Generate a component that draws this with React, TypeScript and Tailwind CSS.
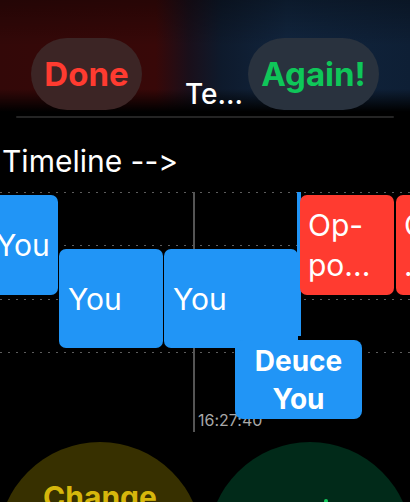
import React from "react";

const dotted =
  "absolute left-0 w-[410px] h-[1px] bg-[repeating-linear-gradient(to_right,#5c5c5c_0px,#5c5c5c_2px,transparent_2px,transparent_8px)]";

export default function App() {
  return (
    <div
      className="relative w-[410px] h-[502px] bg-black overflow-hidden text-white [font-feature-settings:'calt'_0,'liga'_0]"
      style={{ fontFamily: "Inter, 'Noto Sans', sans-serif" }}
    >
      {/* Header */}
      <div className="relative h-[114px]">
        <div className="absolute inset-0 bg-[linear-gradient(to_right,#330808_0%,#380808_38%,#1a0f1a_46%,#0e1a2c_54%,#11253e_70%,#0e1f35_100%)]" />
        <div className="absolute inset-0 bg-[linear-gradient(to_bottom,rgba(0,0,0,0.3)_0%,rgba(0,0,0,0)_40%,rgba(0,0,0,0)_78%,#000_98%)]" />
        <div className="relative flex h-full items-start pt-[38px]">
          <div className="ml-[31px] w-[111px] h-[72px] rounded-full bg-[#3c2525] flex items-center justify-center">
            <span className="text-[33px] leading-none font-bold text-[#ff3b30]">Done</span>
          </div>
          <div className="w-[106px] self-end pl-[43px] mb-[2px]">
            <span className="block text-[28px] leading-[36px] font-medium whitespace-nowrap">Te...</span>
          </div>
          <div className="ml-auto mr-[31px] w-[131px] h-[72px] rounded-full bg-[#29323e] flex items-center justify-center">
            <span className="text-[33px] leading-none font-bold text-[#0fc659]">Again!</span>
          </div>
        </div>
      </div>

      {/* separator */}
      <div className="mx-[16px] mt-[2px] h-[2px] bg-[#242424] rounded-full" />

      <div className="mt-[25px] pl-[2px] text-[30px] leading-[36px] whitespace-nowrap">Timeline --&gt;</div>

      {/* Timeline canvas */}
      <div className="relative mt-[13px] h-[250px]">
        <div className={`${dotted} top-0`} />
        <div className={`${dotted} top-[53px]`} />
        <div className={`${dotted} top-[107px]`} />
        <div className={`${dotted} top-[160px]`} />

        <div className="absolute left-[193px] top-0 w-[2px] h-[240px] bg-[#555555]" />
        <div className="absolute left-[198px] top-[219px] text-[16px] leading-[18px] text-[#a8a8a8]">16:27:40</div>

        <div className="absolute left-[-13px] top-[3px] w-[71px] h-[100px] rounded-[7px] bg-[#2195f6] flex items-center pl-[9px]">
          <span className="text-[30px] leading-none">You</span>
        </div>
        <div className="absolute left-[59px] top-[57px] w-[104px] h-[99px] rounded-[7px] bg-[#2195f6] flex items-center pl-[9px]">
          <span className="text-[30px] leading-none">You</span>
        </div>
        <div className="absolute left-[164px] top-[57px] w-[134px] h-[99px] rounded-[7px] bg-[#2195f6] flex items-center pl-[9px]">
          <span className="text-[30px] leading-none">You</span>
        </div>
        <div className="absolute left-[297px] top-0 w-[4px] h-[144px] bg-[#2195f6]" />

        <div className="absolute left-[300px] top-[3px] w-[94px] h-[100px] rounded-[7px] bg-[#ff3b30] flex flex-col justify-center pl-[8px]">
          <span className="text-[30px] leading-[40px]">Op-</span>
          <span className="text-[30px] leading-[40px]">po...</span>
        </div>
        <div className="absolute left-[396px] top-[3px] w-[94px] h-[100px] rounded-[7px] bg-[#ff3b30] flex flex-col justify-center pl-[8px]">
          <span className="text-[30px] leading-[40px]">Op-</span>
          <span className="text-[30px] leading-[40px]">...</span>
        </div>

        <div className="absolute left-[235px] top-[148px] w-[127px] h-[79px] rounded-[8px] bg-[#2195f6] flex flex-col items-center justify-center">
          <span className="text-[28px] leading-[38px] font-bold">Deuce</span>
          <span className="text-[28px] leading-[38px] font-bold">You</span>
        </div>
      </div>

      {/* bottom circles */}
      <div className="flex ml-[-2px] gap-[6px]">
        <div className="shrink-0 w-[204px] h-[204px] rounded-full bg-[#373000] flex justify-center pt-[37px]">
          <span className="text-[30px] leading-[36px] font-bold text-[#d6b70c]">Change</span>
        </div>
        <div className="relative shrink-0 w-[204px] h-[204px] rounded-full bg-[#012a19]">
          <div className="absolute left-[116px] top-[57px] w-[4px] h-[4px] rounded-full bg-[#14c85c]" />
        </div>
      </div>
    </div>
  );
}
